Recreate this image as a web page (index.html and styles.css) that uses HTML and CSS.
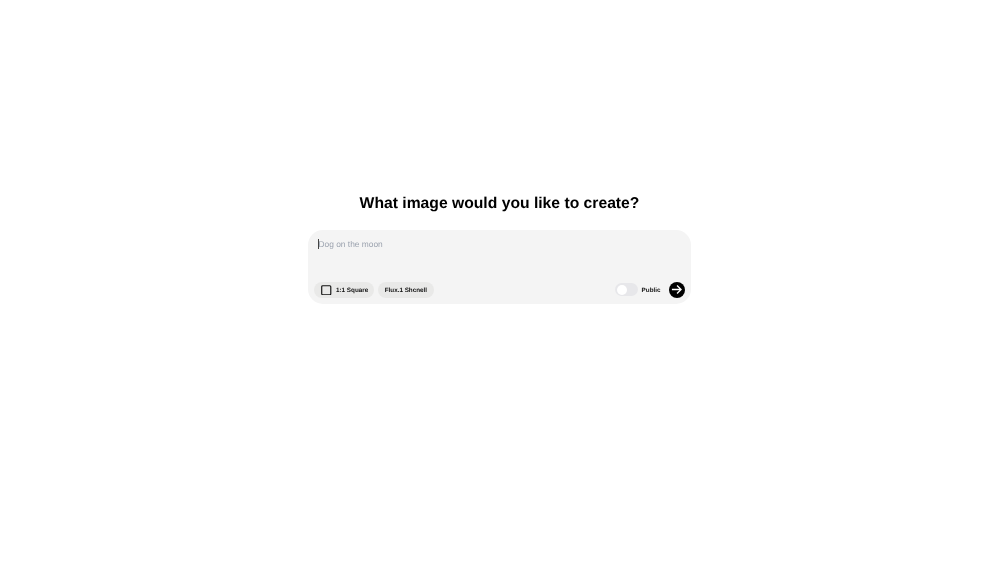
FILE: index.html
```html
<!DOCTYPE html>
<html lang="en">
<head>
<meta charset="utf-8">
<title>Create image</title>
<link rel="stylesheet" href="styles.css">
</head>
<body>
<main class="page">
  <h1 class="title">What image would you like to create?</h1>
  <div class="composer">
    <div class="prompt"><span class="caret"></span><span class="placeholder">Dog on the moon</span></div>
    <div class="toolbar">
      <div class="group">
        <button class="chip chip-icon">
          <svg class="square" width="10.5" height="10.5" viewBox="0 0 11 11"><rect x="0.75" y="0.75" width="9.5" height="9.5" rx="1" fill="none" stroke="#111" stroke-width="1.2"/></svg>
          <span class="chip-text">1:1 Square</span>
        </button>
        <button class="chip"><span class="chip-text">Flux.1 Shcnell</span></button>
      </div>
      <div class="group group-right">
        <span class="toggle"><span class="knob"></span></span>
        <span class="label">Public</span>
        <button class="send">
          <svg width="11" height="11" viewBox="0 0 12 12"><path d="M1 6H11M6.6 1.6L11 6L6.6 10.4" fill="none" stroke="#fff" stroke-width="1.4"/></svg>
        </button>
      </div>
    </div>
  </div>
</main>
</body>
</html>
```
FILE: styles.css
```css
* { box-sizing: border-box; }
html, body { margin: 0; height: 100%; background: #fff; }
body { font-family: "Liberation Sans", Arial, sans-serif; color: #000; text-rendering: geometricPrecision; }
.page { display: flex; flex-direction: column; align-items: center; padding: 193px 1px 0 0; will-change: opacity; }
.title { margin: 0 0 15px; font-size: 15.7px; line-height: 22px; font-weight: 700; letter-spacing: 0; }
.composer { width: 383px; height: 74px; background: #f4f4f4; border-radius: 15px; padding: 8px 6px 6px; display: flex; flex-direction: column; justify-content: space-between; }
.prompt { display: flex; align-items: center; height: 12px; padding-left: 4px; font-size: 8.4px; line-height: 12px; }
.caret { width: 1px; height: 10px; background: #444; margin-right: -0.5px; }
.placeholder { color: #9ca3af; }
.toolbar { display: flex; justify-content: space-between; align-items: center; height: 16.5px; }
.group { display: flex; align-items: center; gap: 4px; }
.group-right { gap: 0; }
.chip { display: flex; align-items: center; height: 16.5px; border: 0; border-radius: 9px; padding: 0 6.5px; background: #e9e9e8; font: 700 6.3px "Liberation Sans", Arial, sans-serif; color: #111; text-rendering: geometricPrecision; }
.chip-text { padding-top: 1px; }
.chip-icon { gap: 4.5px; padding: 0 6px 0 7px; }
.square { display: block; }
.toggle { display: block; width: 22.5px; height: 13px; margin-right: 4px; border-radius: 7px; background: #e7e7ea; padding: 1.5px; }
.knob { display: block; width: 10px; height: 10px; border-radius: 50%; background: #fff; }
.label { font-size: 6.3px; font-weight: 700; color: #111; margin-right: 8px; padding-top: 1px; }
.send { display: flex; align-items: center; justify-content: center; width: 16.5px; height: 16.5px; padding: 0; border: 0; border-radius: 50%; background: #000; }
```
